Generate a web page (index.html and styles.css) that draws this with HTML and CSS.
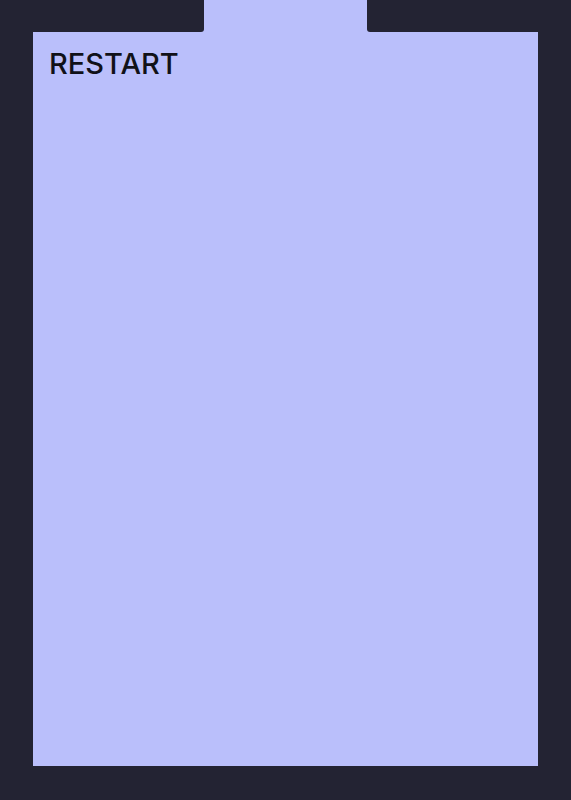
FILE: index.html
```html
<!DOCTYPE html>
<html lang="en">
<head>
    <meta charset="UTF-8">
    <meta name="viewport" content="width=device-width, initial-scale=1.0">
    <title>Restart</title>
    <link rel="stylesheet" href="styles.css">
</head>
<body>
    <div class="frame">
        <!-- notch at the top of the card -->
        <div class="top-row">
            <div class="top-left"></div>
            <div class="tab"></div>
            <div class="top-right"></div>
        </div>
        <div class="card">
            <h1 class="title">RESTART</h1>
        </div>
    </div>
</body>
</html>
```

FILE: styles.css
```css
body {
    margin: 0;
    background-color: #232333;
    font-family: Inter, "Noto Sans", sans-serif;
}

.frame {
    padding: 0 33px 34px;
}

.top-row {
    display: flex;
    height: 32px;
    background-color: #babffb;
}

.top-left {
    width: 171px;
    background-color: #232333;
    border-bottom-right-radius: 3px;
}

.tab {
    width: 163px;
}

.top-right {
    flex: 1;
    background-color: #232333;
    border-bottom-left-radius: 3px;
}

.card {
    height: 734px;
    background-color: #babffb;
    padding: 17px 16px 0;
    box-sizing: border-box;
}

.title {
    margin: 0;
    font-size: 29px;
    font-weight: 500;
    line-height: 1;
    color: #111118;
}
```
